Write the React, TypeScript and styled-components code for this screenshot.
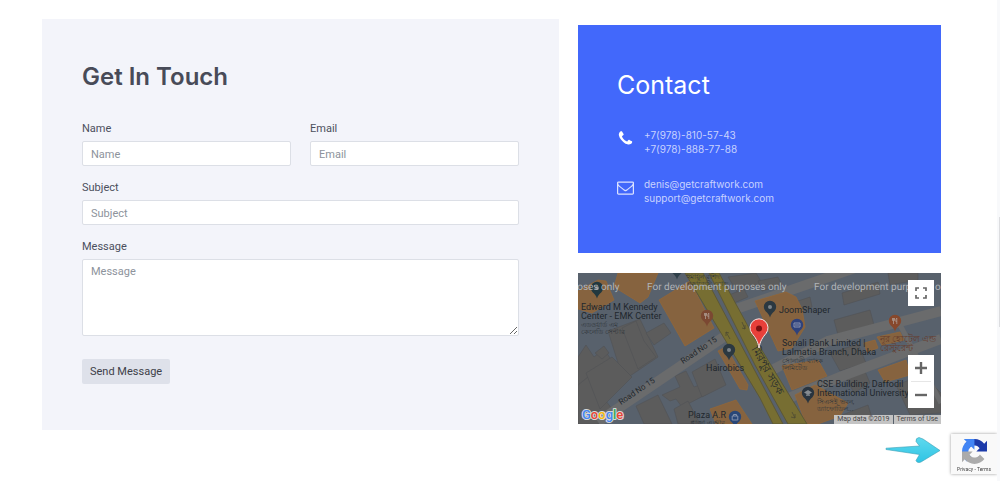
import React from "react";
import styled, { createGlobalStyle } from "styled-components";

const GlobalStyle = createGlobalStyle`
  *, *::before, *::after { box-sizing: border-box; }
  body {
    margin: 0;
    background: #fff;
    color: #4b4f5c;
    font-family: Roboto, "Liberation Sans", sans-serif;
    font-size: 11px;
    line-height: 18px;
  }
`;

const Page = styled.main`
  display: grid;
  grid-template-columns: minmax(0, 517fr) minmax(0, 363fr);
  align-items: start;
  gap: 19px;
  padding: 19px 59px 0 42px;
`;

const FormPanel = styled.form`
  display: flex;
  flex-direction: column;
  gap: 13px;
  padding: 40px 40px 46px;
  background: #f3f4fa;
`;

const Title = styled.h2<{ $light?: boolean }>`
  margin: 0;
  font-family: Inter, "Liberation Sans", sans-serif;
  font-size: ${(p) => (p.$light ? 25 : 24)}px;
  line-height: 36px;
  font-weight: ${(p) => (p.$light ? 400 : 600)};
  color: ${(p) => (p.$light ? "#fff" : "#484b58")};
`;

const FormTitle = styled(Title)`
  margin-bottom: 12px;
`;

const FieldRow = styled.div`
  display: grid;
  grid-template-columns: 1fr 1fr;
  gap: 19px;
`;

const Field = styled.div`
  display: flex;
  flex-direction: column;
  gap: 3px;
  min-width: 0;
`;

const TextBox = styled.input`
  width: 100%;
  height: 25px;
  padding: 1px 8px 0;
  border: 1px solid #dcdfe6;
  border-radius: 2px;
  background: #fff;
  color: #4b4f5c;
  font: inherit;
  &::placeholder { color: #8d939c; opacity: 1; }
`;

const MessageBox = styled(TextBox)`
  display: block;
  height: 77px;
  padding: 3px 8px;
  resize: vertical;
`;

const SendButton = styled.button`
  align-self: flex-start;
  height: 25px;
  margin-top: 10px;
  padding: 0 8px;
  border: 0;
  border-radius: 2px;
  background: #dee1ea;
  color: #3d4048;
  font: inherit;
`;

const Side = styled.div`
  display: flex;
  flex-direction: column;
  gap: 20px;
  padding-top: 6px;
`;

const ContactPanel = styled.section`
  display: flex;
  flex-direction: column;
  gap: 21px;
  padding: 42px 39px 48px;
  background: #4268fb;
`;

const ContactTitle = styled(Title)`
  margin-bottom: 4px;
`;

const ContactRow = styled.div`
  display: flex;
  gap: 10px;
`;

const ContactIcon = styled.svg<{ $faded?: boolean }>`
  flex: none;
  width: 17px;
  height: 17px;
  margin-top: 2px;
  fill: ${(p) => (p.$faded ? "#dbe2ff" : "#fff")};
`;

const ContactLines = styled.div`
  display: flex;
  flex-direction: column;
`;

const ContactLink = styled.a`
  font-family: Inter, "Liberation Sans", sans-serif;
  font-size: 10px;
  line-height: 14px;
  color: #c8d2fe;
  text-decoration: none;
`;

const MapPanel = styled.section`
  position: relative;
  overflow: hidden;
  height: 151px;
  background: #5a626d;
`;

const MapDrawing = styled.svg`
  display: block;
  width: 100%;
  height: 100%;
  font-family: Roboto, "Noto Sans", sans-serif;
`;

const MapControls = styled.div<{ $low?: boolean }>`
  position: absolute;
  right: 7px;
  ${(p) => (p.$low ? "bottom: 16px;" : "top: 7px;")}
  display: flex;
  flex-direction: column;
  width: 26px;
  background: #fff;
`;

const MapButton = styled.button`
  display: grid;
  place-items: center;
  height: 26px;
  padding: 0;
  border: 0;
  background: transparent;
  & > svg { width: 14px; height: 14px; fill: none; stroke: #666; }
`;

const Divider = styled.span`
  height: 1px;
  margin: 0 3px;
  background: #e6e6e6;
`;

const Attribution = styled.div`
  position: absolute;
  right: 0;
  bottom: 0;
  display: flex;
  gap: 1px;
  font-size: 7px;
  line-height: 9px;
  color: #444;
  & > * { padding: 0 3px; background: #c4c4c4; color: inherit; text-decoration: none; }
`;

const Arrow = styled.svg`
  position: fixed;
  right: 58px;
  bottom: 16px;
  width: 58px;
  height: 30px;
`;

const Captcha = styled.aside`
  position: fixed;
  right: 3px;
  bottom: 7px;
  display: flex;
  flex-direction: column;
  align-items: center;
  gap: 1px;
  width: 46px;
  height: 40px;
  padding-top: 5px;
  background: #f9f9f9;
  box-shadow: 0 0 3px #999;
  font-size: 5px;
  line-height: 8px;
  color: #444;
  & > svg { width: 25px; height: 25px; }
  & a { color: inherit; text-decoration: none; }
`;

const ScrollTrack = styled.div`
  position: fixed;
  top: 0;
  right: 0;
  bottom: 0;
  width: 3px;
  background: #f8f9fb;
`;

const ScrollThumb = styled.div`
  height: 110px;
  margin: 217px 0 0 2px;
  background: #dcdde0;
`;

const buildings = [
  "30,58 62,46 80,84 52,103 40,90", "0,84 8,72 16,84 26,76 44,103 20,118 8,128 0,112",
  "17,80 26,73 31,80 24,86", "44,55 58,48 66,68 78,84 60,96", "68,60 86,50 93,60 76,72",
  "0,112 10,104 34,136 20,151 0,151", "97,103 108,98 116,114 127,110 131,120 104,134 98,126 92,128 84,122 102,114",
  "114,99 137,86 148,112 124,124", "58,133 80,122 94,151 66,151", "96,136 110,128 122,151 100,151",
  "8,100 34,84 54,104 22,136", "220,28 232,24 234,34 222,40", "264,20 300,9 302,21 266,32", "256,47 292,37 296,52 260,62",
  "252,80 280,71 288,90 262,98", "310,0 340,0 340,7 312,12", "62,0 78,0 74,4",
  "267,102 286,96 292,110 276,120", "150,4 178,0 184,10 160,20", "318,112 345,102 363,120 363,140 332,142",
  "264,142 290,132 296,151 266,151", "151,22 166,16 170,24 156,30", "180,8 200,4 204,12 184,18",
];

const landmarks = [
  "0,36 0,18 20,7 28,8 36,27 14,40", "40,0 80,0 70,24 62,30 36,14", "81,27 112,8 136,55 107,73",
  "140,78 148,74 170,112 169,117 162,116", "132,136 158,127 174,151 138,151",
  "177,28 208,19 218,24 224,36 227,54 214,75 200,78", "204,93 240,87 249,103 214,117",
  "286,70 297,67 300,75 289,79", "300,97 328,87 332,102 307,109", "299,64 322,59 326,67 304,72",
  "217,122 237,112 270,130 262,143 240,151 228,151",
];

interface PinProps { x: number; y: number; color: string; kind?: "dot" | "food" | "card" | "cap" | "bag" }

const Pin = ({ x, y, color, kind = "dot" }: PinProps) => (
  <g transform={`translate(${x} ${y})`}>
    <path d="M0 10.500C-.8 7.500-2.500 6-4.400 4.200A6.200 6.200 0 1 1 4.400 4.200C2.500 6 .8 7.500 0 10.500Z" fill={color} />
    {kind === "dot" && <circle r="2" fill="#7d8489" />}
    {kind === "food" && <path d="M-2.500-3v2.500h2V-3M-1.500-3v6M1.800 3v-6q-1.200 1-1 3.500h1" fill="none" stroke="#a99388" strokeWidth=".9" />}
    {kind === "card" && <path d="M-3-2h6v4h-6zM-2 0h4" fill="none" stroke="#8a93b0" strokeWidth="1" />}
    {kind === "cap" && <path d="M-4-.5 0-3 4-.5 0 1.800ZM-2 1.500v1.300h4V1.500" fill="#858b91" />}
    {kind === "bag" && <path d="M-2.800-1h5.600v4h-5.600zM-1.500-1v-1.500h3V-1" fill="none" stroke="#8392ad" strokeWidth="1" />}
  </g>
);

const StreetMap = () => (
  <MapDrawing viewBox="0 0 363 151" preserveAspectRatio="xMidYMid slice" role="img" aria-label="Map">
    <rect width="363" height="151" fill="#58616c" />
    {buildings.map((p) => <polygon key={p} points={p} fill="#5c5c5c" stroke="#515355" strokeWidth=".6" />)}
    <g fill="none" stroke="#6a6b6c" strokeWidth="10">
      <path d="M20 149 150 61" />
      <path d="M158 36 280-6" />
      <path d="M196 96 250 68 363 38" />
      <path d="M206 127 262 104 363 66" />
      <path d="M320 48 363 130" strokeWidth="5" />
    </g>
    {landmarks.map((p) => <polygon key={p} points={p} fill="#86633f" stroke="#966735" strokeWidth=".7" />)}
    <path d="M107 0h18L177 98l28 53h-10L182 125Z" fill="#776e32" stroke="#5d5836" />
    <path d="M131 0h10l36 66 52 85h-19L177 92Z" fill="#776e32" stroke="#5d5836" />
    <g fill="none" stroke="#4c4a33" strokeWidth=".8">
      <path d="m152 66-4-7m0 4v-4l3 1M164 49l3 7m-3-1 3 1v-4M214 139l3 6m-4-1 4 1v-4" />
    </g>

    <Pin x={19} y={15} color="#21383f" />
    <Pin x={99} y={-4} color="#2e3f49" />
    <Pin x={151} y={77} color="#2b3841" />
    <Pin x={192} y={34} color="#2b3841" />
    <Pin x={129} y={43} color="#7b4832" kind="food" />
    <Pin x={317} y={48} color="#87482c" kind="food" />
    <Pin x={219} y={52} color="#2f427c" kind="card" />
    <Pin x={230} y={120} color="#29343f" kind="cap" />
    <Pin x={157} y={144} color="#294778" kind="bag" />

    <g fill="#1f272d" fontSize="9">
      <text x="3" y="37">Edward M Kennedy</text>
      <text x="3" y="46">Center - EMK Center</text>
      <text x="128" y="98">Hairobics</text>
      <text x="110" y="145">Plaza A.R</text>
      <text x="201" y="40">JoomShaper</text>
      <text x="204" y="73">Sonali Bank Limited |</text>
      <text x="204" y="82">Lalmatia Branch, Dhaka</text>
      <text x="239" y="114">CSE Building, Daffodil</text>
      <text x="239" y="123">International University</text>
      <text fontSize="8" transform="translate(105 91) rotate(-34)">Road No 15</text>
      <text fontSize="8" transform="translate(43 132) rotate(-34)">Road No 15</text>
      <text fontSize="11" transform="translate(173 76) rotate(60)">মিরপুর সড়ক</text>
    </g>
    <g fill="#30363b" fontSize="7">
      <text x="3" y="54">এডওয়ার্ড এম</text>
      <text x="3" y="61">কেনেডি সেন্টার</text>
      <text x="108" y="6">হুমায়ুন রশিদ</text>
      <text x="108" y="13">একাডেমি রোড</text>
      <text x="204" y="90">সোনালী ব্যাংক</text>
      <text x="204" y="97">লিমিটেড</text>
      <text x="239" y="131">সিএসই ভবন,</text>
      <text x="239" y="138">ড্যাফোডিল...</text>
      <text x="112" y="152">প্লাজা এ আর</text>
    </g>
    <g fill="#663d2e" fontSize="9">
      <text x="302" y="69">নূর হোটেল এন্ড</text>
      <text x="302" y="78">রেস্টুরেন্ট</text>
    </g>
    <g fill="#b0b4b8" fontSize="10" textRendering="geometricPrecision">
      <text x="-98" y="17">For development purposes only</text>
      <text x="69" y="17">For development purposes only</text>
      <text x="236" y="17">For development purposes only</text>
    </g>

    <path d="M181 75C180 68 177 64 174 60.500A9 9 0 1 1 188 60.500C185 64 182 68 181 75Z" fill="#e8403a" stroke="#f3e9e8" strokeWidth="1" />
    <circle cx="181" cy="55.500" r="3" fill="#7a1212" />

    <text x="4" y="146" fontSize="13" fontWeight="500" stroke="#d5d8da" strokeWidth="2" paintOrder="stroke" strokeLinejoin="round">
      <tspan fill="#4285f4">G</tspan><tspan fill="#ea4335">o</tspan><tspan fill="#fbbc05">o</tspan>
      <tspan fill="#4285f4">g</tspan><tspan fill="#34a853">l</tspan><tspan fill="#ea4335">e</tspan>
    </text>
  </MapDrawing>
);

export default function App() {
  return (
    <>
      <GlobalStyle />
      <Page>
        <FormPanel onSubmit={(e) => e.preventDefault()}>
          <FormTitle>Get In Touch</FormTitle>
          <FieldRow>
            <Field>
              <label htmlFor="name">Name</label>
              <TextBox id="name" placeholder="Name" />
            </Field>
            <Field>
              <label htmlFor="email">Email</label>
              <TextBox id="email" type="email" placeholder="Email" />
            </Field>
          </FieldRow>
          <Field>
            <label htmlFor="subject">Subject</label>
            <TextBox id="subject" placeholder="Subject" />
          </Field>
          <Field>
            <label htmlFor="message">Message</label>
            <MessageBox as="textarea" id="message" placeholder="Message" />
          </Field>
          <SendButton type="submit">Send Message</SendButton>
        </FormPanel>

        <Side>
          <ContactPanel>
            <ContactTitle $light>Contact</ContactTitle>
            <ContactRow>
              <ContactIcon viewBox="0 0 1792 1792" aria-hidden="true">
                <path d="M1600 1240q0 27-10 70.500t-21 68.500q-21 50-122 106-94 51-186 51-27 0-53-3.500t-57.500-12.500-47-14.500-55.500-20.500-49-18q-98-35-175-83-127-79-264-216t-216-264q-48-77-83-175-3-9-18-49t-20.500-55.500-14.500-47-12.500-57.500-3.500-53q0-92 51-186 56-101 106-122 25-11 68.500-21t70.500-10q14 0 21 3 18 6 53 76 11 19 30 54t35 63.500 31 53.500q3 4 17.500 25t21.500 35.500 7 28.500q0 20-28.500 50t-62 55-62 53-28.500 46q0 9 5 22.500t8.500 20.500 14 24 11.500 19q76 137 174 235t235 174q2 1 19 11.500t24 14 20.500 8.500 22.500 5q18 0 46-28.500t53-62 55-62 50-28.500q14 0 28.500 7t35.500 21.500 25 17.500q25 15 53.500 31t63.500 35 54 30q70 35 76 53 3 7 3 21z" />
              </ContactIcon>
              <ContactLines>
                <ContactLink href="tel:+79788105743">+7(978)-810-57-43</ContactLink>
                <ContactLink href="tel:+79788887788">+7(978)-888-77-88</ContactLink>
              </ContactLines>
            </ContactRow>
            <ContactRow>
              <ContactIcon $faded viewBox="0 0 1792 1792" aria-hidden="true">
                <path d="M1664 1504v-768q-32 36-69 66-268 206-426 338-51 43-83 67t-86.500 48.500-102.500 24.500h-2q-48 0-102.500-24.500t-86.500-48.500-83-67q-158-132-426-338-37-30-69-66v768q0 13 9.500 22.500t22.500 9.500h1472q13 0 22.500-9.500t9.500-22.500zm0-1051v-24.500l-.5-13-3-12.500-5.500-9-9-7.500-14-2.500h-1472q-13 0-22.500 9.500t-9.500 22.500q0 168 147 284 193 152 401 317 6 5 35 29.500t46 37.500 44.500 31.500 50.500 27.500 43 9h2q20 0 43-9t50.500-27.500 44.500-31.500 46-37.500 35-29.500q208-165 401-317 54-43 100.500-115.500t46.500-131.500zm128-37v1088q0 66-47 113t-113 47h-1472q-66 0-113-47t-47-113v-1088q0-66 47-113t113-47h1472q66 0 113 47t47 113z" />
              </ContactIcon>
              <ContactLines>
                <ContactLink href="mailto:denis@getcraftwork.com">denis@getcraftwork.com</ContactLink>
                <ContactLink href="mailto:support@getcraftwork.com">support@getcraftwork.com</ContactLink>
              </ContactLines>
            </ContactRow>
          </ContactPanel>

          <MapPanel>
            <StreetMap />
            <MapControls>
              <MapButton type="button" aria-label="Toggle fullscreen">
                <svg viewBox="0 0 14 14"><path d="M2 5V2h3M9 2h3v3M12 9v3H9M5 12H2V9" strokeWidth="1.700" /></svg>
              </MapButton>
            </MapControls>
            <MapControls $low>
              <MapButton type="button" aria-label="Zoom in">
                <svg viewBox="0 0 14 14"><path d="M1 7h12M7 1v12" strokeWidth="2.400" /></svg>
              </MapButton>
              <Divider />
              <MapButton type="button" aria-label="Zoom out">
                <svg viewBox="0 0 14 14"><path d="M1 7h12" strokeWidth="2.400" /></svg>
              </MapButton>
            </MapControls>
            <Attribution>
              <span>Map data ©2019</span>
              <a href="#terms">Terms of Use</a>
            </Attribution>
          </MapPanel>
        </Side>
      </Page>

      <Arrow viewBox="0 0 58 30" aria-hidden="true">
        <defs>
          <linearGradient id="arrowFill" x1="0" y1="0" x2="0" y2="1">
            <stop offset="0" stopColor="#5fd9ee" />
            <stop offset="1" stopColor="#2fc4e4" />
          </linearGradient>
        </defs>
        <path d="M2 13.200 35.500 11 32 6.500Q31.500 3 35 2.500L39 4 56 15.500 37 27Q33 28.500 32 25.500L35.500 19.500 2 14.500Z" fill="url(#arrowFill)" stroke="#3b9fb5" strokeWidth=".6" />
      </Arrow>

      <Captcha>
        <svg viewBox="0 0 64 64" aria-hidden="true">
          <path d="M64 31.955l-.033-1.370V4.687l-7.160 7.160C50.948 4.674 42.033.093 32.050.093c-10.400 0-19.622 4.960-25.458 12.640l11.736 11.860a15.550 15.550 0 0 1 4.754-5.334c2.050-1.600 4.952-2.906 8.968-2.906.485 0 .86.057 1.135.163 4.976.393 9.288 3.140 11.828 7.124l-8.307 8.307L64 31.953" fill="#1c3aa9" />
          <path d="M31.862.094l-1.370.033H4.594l7.160 7.160C4.580 13.147 0 22.060 0 32.046c0 10.400 4.960 19.622 12.640 25.458L24.500 45.768a15.550 15.550 0 0 1-5.334-4.754c-1.600-2.050-2.906-4.952-2.906-8.968 0-.485.057-.86.163-1.135.393-4.976 3.140-9.288 7.124-11.828l8.307 8.307L31.860.095" fill="#4285f4" />
          <path d="M.001 32.045l.033 1.370v25.898l7.160-7.160c5.860 7.173 14.774 11.754 24.760 11.754 10.400 0 19.622-4.960 25.458-12.640l-11.736-11.860a15.550 15.550 0 0 1-4.754 5.334c-2.050 1.600-4.952 2.906-8.968 2.906-.485 0-.86-.057-1.135-.163-4.976-.393-9.288-3.140-11.828-7.124l8.307-8.307c-10.522.040-22.400.066-27.295-.005" fill="#ababab" />
        </svg>
        <span><a href="#privacy">Privacy</a> - <a href="#captcha-terms">Terms</a></span>
      </Captcha>

      <ScrollTrack aria-hidden="true"><ScrollThumb /></ScrollTrack>
    </>
  );
}
